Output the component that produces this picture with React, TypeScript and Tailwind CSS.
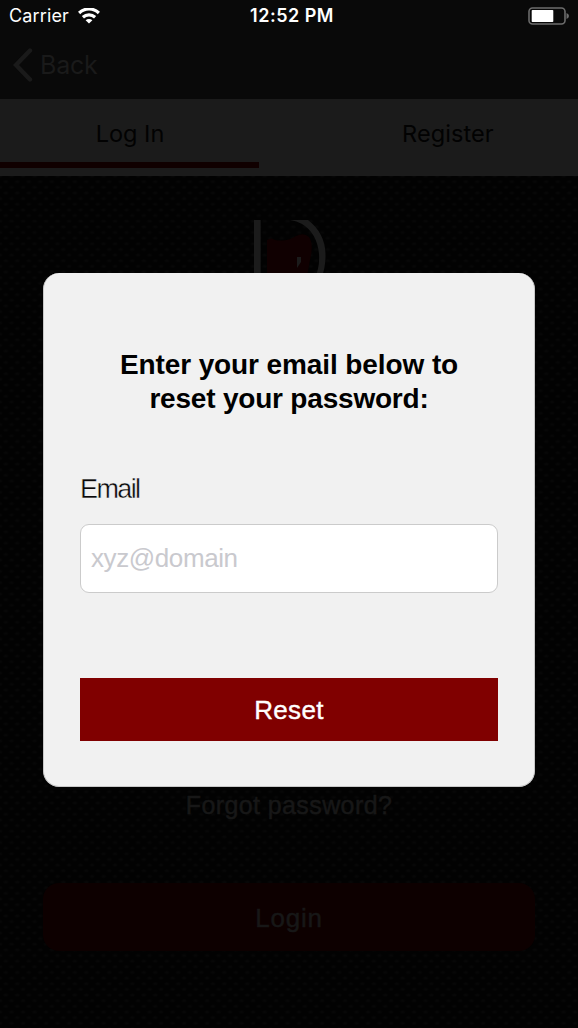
const dots =
  "bg-[#020202] bg-[radial-gradient(ellipse_3px_2px_at_center,#070707_40%,transparent_100%),radial-gradient(ellipse_3px_2px_at_center,#070707_40%,transparent_100%)] bg-[length:11.5px_11.3px] bg-[position:0_0,5.75px_5.65px]";

function StatusBar() {
  return (
    <div className="flex h-8 items-center justify-between pr-[8px] pl-[9px] text-white">
      <div className="flex w-[170px] items-center gap-[9px]">
        <span className="text-[18px] leading-8 tracking-[0.15px]">Carrier</span>
        <svg width="22" height="16" viewBox="0 0 22 16" fill="none" stroke="white" strokeWidth="3.2">
          <path d="M1.1 5 A14.2 14.2 0 0 1 20.9 5" />
          <path d="M4.9 9.3 A9 9 0 0 1 17.1 9.3" />
          <path d="M11 15.6 L7.6 12.3 A4.8 4.8 0 0 1 14.4 12.3 Z" fill="white" stroke="none" />
        </svg>
      </div>
      <span className="pl-[5px] text-[18px] leading-8 font-semibold tracking-[0.5px]">12:52 PM</span>
      <div className="flex w-[170px] justify-end">
        <svg width="42" height="18" viewBox="0 0 42 18">
          <rect x="1" y="1" width="36" height="16" rx="3.5" fill="none" stroke="#6c6c6c" strokeWidth="1.6" />
          <rect x="3.7" y="3" width="21.6" height="12" rx="0.8" fill="white" />
          <path d="M38.5 6 Q41 7 41 9 T38.5 12 Z" fill="#6c6c6c" />
        </svg>
      </div>
    </div>
  );
}

function Logo() {
  return (
    <svg className="mt-[44px] ml-[253px] block" width="74" height="100" viewBox="0 0 74 100">
      <path d="M1 0 H7.7 V100 H1 Z" fill="#1b1b1b" />
      <path d="M37 0 H55 Q72 13 72.5 34 Q73 46 68 60 H61 Q67 48 66 34 Q64 13 49 4 Q44 1 37 0 Z" fill="#1b1b1b" />
      <path d="M14 20 Q18 17 22 20 Q34 22 43 16 Q51 12 56 17 Q61 24 57 40 L53 62 H14 Z" fill="#100001" />
      <path d="M44 37 H48 V42 L44 48 Z" fill="#1b1b1b" />
    </svg>
  );
}

function ResetDialog() {
  return (
    <div className="absolute top-[273px] left-[43px] h-[514px] w-[492px] rounded-[16px] border border-t-0 border-[#c8c8c8] bg-[#f1f1f1] px-[36px] pt-[75px] font-['Liberation_Sans',sans-serif]">
      <h1 className="text-center text-[28px] leading-[34px] font-bold tracking-[-0.1px] text-black">
        <span className="block whitespace-nowrap">Enter your email below to</span>
        <span className="block whitespace-nowrap tracking-[-0.2px]">reset your password:</span>
      </h1>
      <label className="mt-[57px] block text-[27px] leading-[32px] tracking-[-1.6px] text-[#080808] [-webkit-text-stroke:0.4px_#f1f1f1]">
        Email
      </label>
      <div className="mt-[19px] flex h-[69px] items-center rounded-[9px] border border-[#cbcbcb] bg-white pl-[10px] text-[26px] tracking-[-0.4px] text-[#c9c9ce]">
        xyz@domain
      </div>
      <button className="mt-[85px] flex h-[63px] w-full items-center justify-center bg-[#800000] pt-[2px] text-[26px] tracking-[0.3px] text-white [-webkit-text-stroke:0.4px_white]">
        Reset
      </button>
    </div>
  );
}

export default function App() {
  return (
    <div className="relative flex h-[1028px] w-[578px] flex-col overflow-hidden bg-black font-['Inter',sans-serif]">
      <header className="h-[99px] bg-[#090909]">
        <StatusBar />
        <div className="flex h-[66px] items-center pl-[13px] text-[#1a1a1a]">
          <svg width="20" height="34" viewBox="0 0 20 34" fill="none" stroke="currentColor" strokeWidth="4.4" strokeLinecap="round">
            <path d="M17 2.5 L3 17 L17 31.5" />
          </svg>
          <span className="ml-[7px] pt-[2px] text-[25px] tracking-[-0.2px]">Back</span>
        </div>
      </header>
      <nav className="flex h-[77px] bg-[#1b1b1b] text-[23.5px] text-[#020202]">
        <div className="h-[69px] w-[259px] border-b-[6px] border-[#100000] pl-[1px] text-center leading-[70px]">Log In</div>
        <div className="pl-[143px] leading-[70px] tracking-[0.1px]">Register</div>
      </nav>
      <main className={`flex flex-1 flex-col font-['Liberation_Sans',sans-serif] text-[26px] text-[#171717] ${dots}`}>
        <Logo />
        <div className="mt-[469px] text-center text-[25px] leading-[32px] tracking-[0.4px] [-webkit-text-stroke:0.5px_#171717]">Forgot password?</div>
        <div className="mx-[43px] mt-[62px] flex h-[68px] items-center justify-center rounded-[16px] bg-[#0d0000] pt-[2px] tracking-[0.8px] [-webkit-text-stroke:0.5px_#171717]">
          Login
        </div>
      </main>
      <ResetDialog />
    </div>
  );
}
